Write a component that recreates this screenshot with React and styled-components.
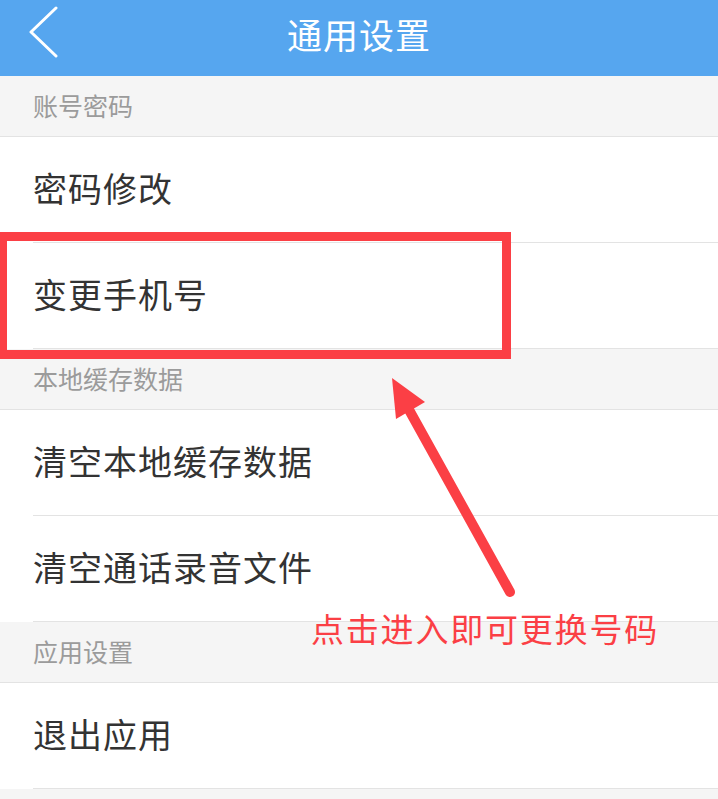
import React from "react";
import styled, { createGlobalStyle } from "styled-components";

const GlobalStyle = createGlobalStyle`
  body {
    margin: 0;
    background: #f5f5f5;
    font-family: "Noto Sans CJK SC", "Noto Sans", sans-serif;
  }
`;

const Page = styled.div`
  position: relative;
  width: 718px;
  height: 799px;
  overflow: hidden;
  background: #f5f5f5;
`;

const Header = styled.div`
  display: grid;
  grid-template-columns: 1fr auto 1fr;
  align-items: center;
  height: 76px;
  background: #56a6ef;
  color: #fff;
`;

const BackButton = styled.div`
  display: flex;
  align-items: center;
  padding: 0 0 12px 28px;
`;

const Title = styled.h1`
  margin: 0 0 10px;
  font-size: 35px;
  font-weight: 400;
  letter-spacing: 1px;
  line-height: 1;
`;

const SectionHeader = styled.div`
  display: flex;
  align-items: center;
  height: 57px;
  padding: 0 0 3px 33px;
  border-bottom: 1px solid #e3e3e3;
  color: #9b9b9b;
  font-size: 25px;
`;

const Row = styled.div`
  background: #fff;
  padding-left: 33px;
`;

const RowInner = styled.div`
  display: flex;
  align-items: center;
  height: 100px;
  padding-bottom: 5px;
  border-bottom: 1px solid #e3e3e3;
  color: #333;
  font-size: 34px;
  letter-spacing: 1px;
`;

const Highlight = styled.div`
  position: absolute;
  left: -2px;
  top: 232px;
  width: 513px;
  height: 127px;
  box-sizing: border-box;
  border: 9px solid #fb3f45;
  pointer-events: none;
`;

const Overlay = styled.svg`
  position: absolute;
  left: 0;
  top: 0;
  pointer-events: none;
`;

const Note = styled.div`
  position: absolute;
  left: 311px;
  top: 607px;
  color: #fb3f45;
  font-size: 33px;
  letter-spacing: 1.8px;
  line-height: 42px;
`;

const sections = [
  { title: "账号密码", items: ["密码修改", "变更手机号"] },
  { title: "本地缓存数据", items: ["清空本地缓存数据", "清空通话录音文件"] },
  { title: "应用设置", items: ["退出应用"] },
];

export default function App() {
  return (
    <Page>
      <GlobalStyle />
      <Header>
        <BackButton>
          <svg width="30" height="52" viewBox="0 0 30 52">
            <polyline
              points="28,2 3,26 28,50"
              fill="none"
              stroke="#fff"
              strokeWidth="3"
              strokeLinecap="round"
              strokeLinejoin="round"
            />
          </svg>
        </BackButton>
        <Title>通用设置</Title>
        <div />
      </Header>
      {sections.map((s) => (
        <div key={s.title}>
          <SectionHeader>{s.title}</SectionHeader>
          {s.items.map((item) => (
            <Row key={item}>
              <RowInner>{item}</RowInner>
            </Row>
          ))}
        </div>
      ))}

      <Highlight />
      <Overlay width="718" height="799" viewBox="0 0 718 799">
        <line
          x1="510"
          y1="592"
          x2="408"
          y2="408"
          stroke="#fb3f45"
          strokeWidth="10"
          strokeLinecap="round"
        />
        <polygon points="392,378 425,402 396,419" fill="#fb3f45" />
      </Overlay>
      <Note>点击进入即可更换号码</Note>
    </Page>
  );
}
